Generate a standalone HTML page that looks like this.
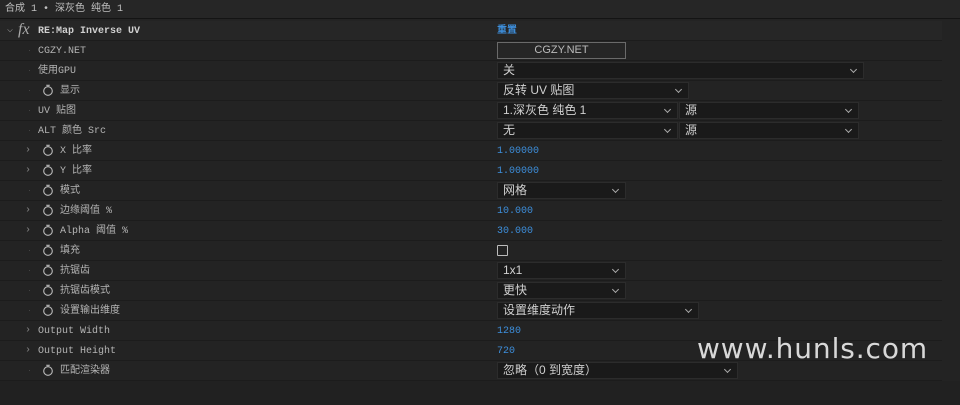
<!DOCTYPE html><html><head><meta charset="utf-8"><style>
body{margin:0;width:960px;height:405px;background:#232323;overflow:hidden;font-family:"Liberation Mono","Noto Sans CJK SC",monospace;font-size:10px;color:#b4b4b4;position:relative}
.top{position:absolute;left:0;top:0;width:960px;height:19px;background:#262626;border-bottom:1px solid #141414;font-size:10px;line-height:19px;padding-left:5px;box-sizing:border-box;color:#c0c0c0}
.row{position:absolute;left:0;width:942px;height:20px;border-bottom:1px solid #1c1c1c;box-sizing:border-box;background:#232323}
.lab{position:absolute;top:1px;line-height:19px;white-space:nowrap}
.arr{position:absolute;left:25px;top:0;line-height:19px;color:#888;font-size:10px}
.dot{position:absolute;left:29px;top:9px;width:1px;height:1px;background:#444}
.sw{position:absolute;left:42px;top:3px;width:12px;height:12px}
.val{position:absolute;left:497px;top:1px;line-height:19px;color:#3d8fdc}
.dd{position:absolute;top:1px;height:17px;background:#1a1a1a;border:1px solid #2c2c2c;box-sizing:border-box;color:#d0d0d0;font-family:"Liberation Sans","Noto Sans CJK SC",sans-serif;font-size:12px;line-height:15px;padding-left:5px}
.dd:after{content:"";position:absolute;right:7px;top:4px;width:4px;height:4px;border-right:1px solid #aaa;border-bottom:1px solid #aaa;transform:rotate(45deg)}
.btn{position:absolute;top:1px;height:17px;box-sizing:border-box;font-family:"Liberation Sans",sans-serif;line-height:15px}
</style></head><body>
<div class="top">合成 1 • 深灰色 纯色 1</div>
<div class="row" style="top:21px;background:#262626">
<span class="arr" style="left:7px">⌵</span><span class="lab" style="left:18px;top:-1px;font-family:'Liberation Serif',serif;font-style:italic;font-size:16px;color:#aaa">fx</span>
<span class="lab" style="left:38px;font-weight:bold;color:#d0d0d0">RE:Map Inverse UV</span>
<span class="val" style="font-weight:bold">重置</span></div>
<div id="rows"></div>
<div style="position:absolute;left:0;top:381px;width:960px;height:24px;background:#212121"></div>
<div style="position:absolute;left:697px;top:332px;font-family:'DejaVu Sans',sans-serif;font-size:28px;color:#d8d8d8;letter-spacing:0.9px">www.hunls.com</div>
<script>
const sw='<svg class="sw" viewBox="0 0 12 12"><circle cx="6" cy="7" r="4.3" fill="none" stroke="#bbb" stroke-width="1.1"/><path d="M4.2 1.2h3.6M6 1.2v1.5" stroke="#bbb" stroke-width="1"/></svg>';
const R=[
["CGZY.NET",0,0,'<div class="btn" style="left:497px;width:129px;background:#262626;border:1px solid #6a6a6a;text-align:center;font-size:11px;color:#bbb">CGZY.NET</div>'],
["使用GPU",0,0,'<div class="dd" style="left:497px;width:367px">关</div>'],
["显示",1,0,'<div class="dd" style="left:497px;width:192px">反转 UV 贴图</div>'],
["UV 贴图",0,0,'<div class="dd" style="left:497px;width:181px">1.深灰色 纯色 1</div><div class="dd" style="left:679px;width:180px">源</div>'],
["ALT 颜色 Src",0,0,'<div class="dd" style="left:497px;width:181px">无</div><div class="dd" style="left:679px;width:180px">源</div>'],
["X 比率",1,1,'<span class="val">1.00000</span>'],
["Y 比率",1,1,'<span class="val">1.00000</span>'],
["模式",1,0,'<div class="dd" style="left:497px;width:129px">网格</div>'],
["边缘阈值 %",1,1,'<span class="val">10.000</span>'],
["Alpha 阈值 %",1,1,'<span class="val">30.000</span>'],
["填充",1,0,'<div style="position:absolute;left:497px;top:4px;width:9px;height:9px;border:1px solid #bbb;border-radius:1px"></div>'],
["抗锯齿",1,0,'<div class="dd" style="left:497px;width:129px">1x1</div>'],
["抗锯齿模式",1,0,'<div class="dd" style="left:497px;width:129px">更快</div>'],
["设置输出维度",1,0,'<div class="dd" style="left:497px;width:202px">设置维度动作</div>'],
["Output Width",0,1,'<span class="val">1280</span>'],
["Output Height",0,1,'<span class="val">720</span>'],
["匹配渲染器",1,0,'<div class="dd" style="left:497px;width:241px">忽略（0 到宽度）</div>']];
let h='';R.forEach((r,i)=>{const t=41+i*20;h+=`<div class="row" style="top:${t}px">`+(r[2]?'<span class="arr">›</span>':'<span class="dot"></span>')+(r[1]?sw:'')+`<span class="lab" style="left:${r[1]?60:38}px">${r[0]}</span>${r[3]}</div>`});
document.getElementById('rows').innerHTML=h;
</script>
</body></html>
